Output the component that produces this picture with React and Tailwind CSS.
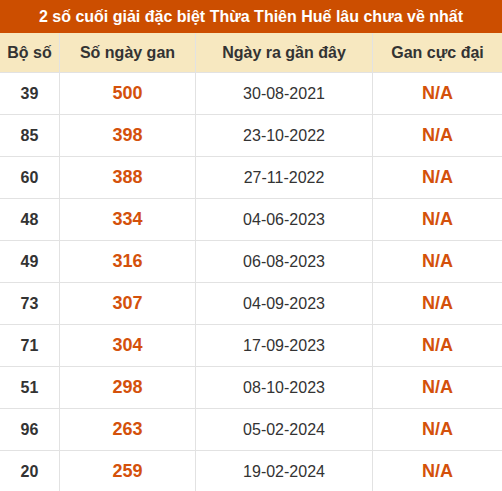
const rows = [
  ['39', '500', '30-08-2021'],
  ['85', '398', '23-10-2022'],
  ['60', '388', '27-11-2022'],
  ['48', '334', '04-06-2023'],
  ['49', '316', '06-08-2023'],
  ['73', '307', '04-09-2023'],
  ['71', '304', '17-09-2023'],
  ['51', '298', '08-10-2023'],
  ['96', '263', '05-02-2024'],
  ['20', '259', '19-02-2024'],
];

export default function App() {
  return (
    <div className="w-[502px] bg-white text-[#333] font-['Liberation_Sans',Arial,sans-serif]">
      <div className="h-[33px] bg-[#cc4e00] text-white font-bold text-[16px] flex items-center justify-center">
        2 số cuối giải đặc biệt Thừa Thiên Huế lâu chưa về nhất
      </div>
      <div className="grid grid-cols-[60px_136px_177px_1fr] bg-[#f7e8c0] font-bold text-[16px] h-[40px] border-b border-[#e2e2e2]">
        <div className="flex items-center justify-center border-r border-[#e2e2e2]">Bộ số</div>
        <div className="flex items-center justify-center border-r border-[#e2e2e2]">Số ngày gan</div>
        <div className="flex items-center justify-center border-r border-[#e2e2e2]">Ngày ra gần đây</div>
        <div className="flex items-center justify-center">Gan cực đại</div>
      </div>
      {rows.map(([num, days, date]) => (
        <div key={num} className="grid grid-cols-[60px_136px_177px_1fr] h-[42px] border-b border-[#e2e2e2]">
          <div className="flex items-center justify-center border-r border-[#e2e2e2] font-bold text-[16px]">{num}</div>
          <div className="flex items-center justify-center border-r border-[#e2e2e2] font-bold text-[18px] text-[#d4510b]">{days}</div>
          <div className="flex items-center justify-center border-r border-[#e2e2e2] text-[16px]">{date}</div>
          <div className="flex items-center justify-center font-bold text-[18px] text-[#d4510b]">N/A</div>
        </div>
      ))}
    </div>
  );
}
